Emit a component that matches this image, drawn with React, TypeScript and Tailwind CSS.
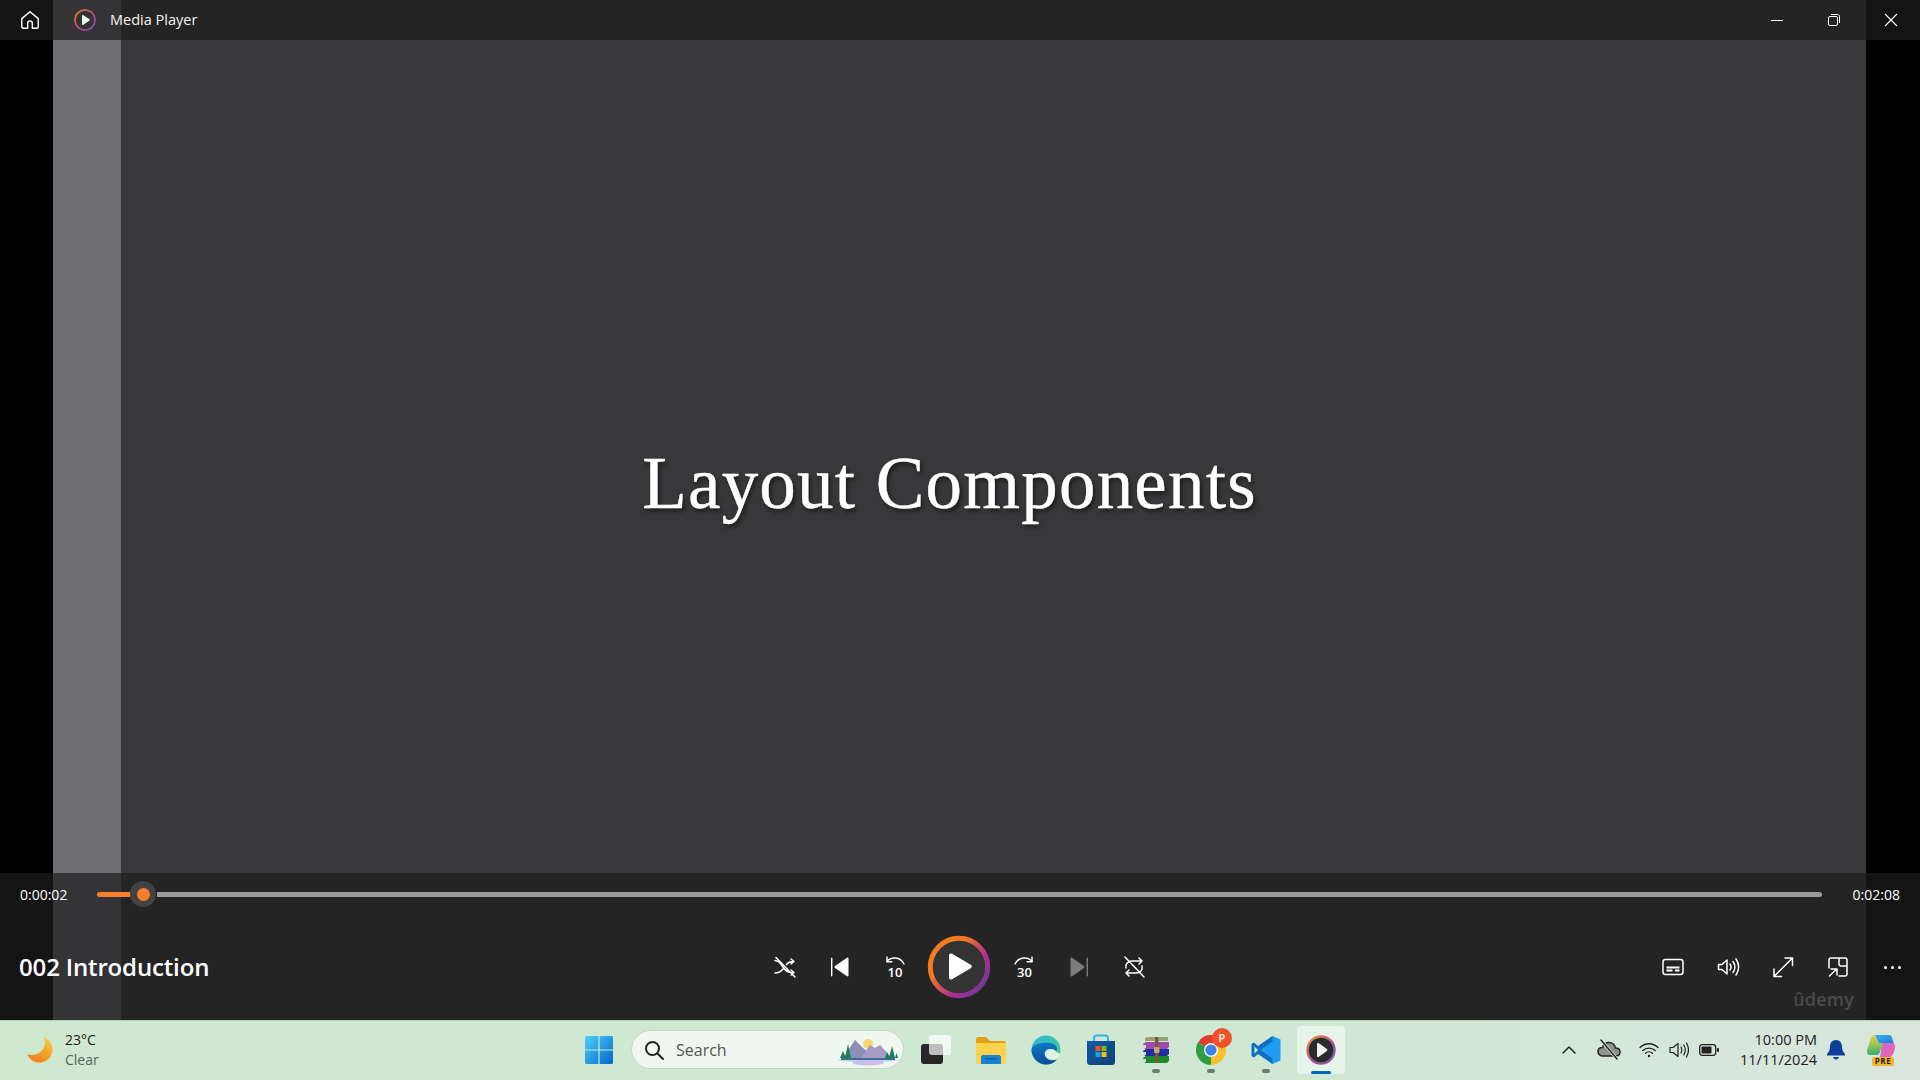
import { ReactNode } from 'react';

// shared svg wrapper for the white outline icons in the player
function Line({ size = 24, children, className = '' }: { size?: number; children: ReactNode; className?: string }) {
  return (
    <svg width={size} height={size} viewBox="0 0 24 24" fill="none" stroke="currentColor" strokeWidth={1.5} strokeLinecap="round" strokeLinejoin="round" className={className}>
      {children}
    </svg>
  );
}

function Ctl({ children, w = 'w-[55px]' }: { children: ReactNode; w?: string }) {
  return <div className={`flex h-[64px] items-center justify-center text-white ${w}`}>{children}</div>;
}

function PlayLogo() {
  return (
    <svg width="24" height="24" viewBox="0 0 24 24">
      <defs>
        <linearGradient id="logoRing" x1="0" y1="0" x2="1" y2="1">
          <stop offset="0" stopColor="#f5821f" />
          <stop offset="0.6" stopColor="#b5408f" />
          <stop offset="1" stopColor="#7c5bb5" />
        </linearGradient>
      </defs>
      <circle cx="12" cy="12" r="10" fill="#333" stroke="url(#logoRing)" strokeWidth="1.6" />
      <path d="M9 7.4c0-.5.5-.8 1-.5l6.6 4.4c.4.3.4.9 0 1.2L10 17c-.5.3-1 0-1-.5z" fill="#f0f0f0" />
    </svg>
  );
}

function BigPlay() {
  return (
    <svg width="64" height="64" viewBox="0 0 64 64">
      <defs>
        <linearGradient id="bigRing" x1="0.1" y1="0.1" x2="0.9" y2="0.8">
          <stop offset="0.3" stopColor="#f27a21" />
          <stop offset="0.72" stopColor="#b32d8e" />
          <stop offset="1" stopColor="#7a3a98" />
        </linearGradient>
      </defs>
      <circle cx="32" cy="32" r="28.7" fill="#333333" stroke="url(#bigRing)" strokeWidth="5" />
      <path d="M22 20.500c0-1.600 1.700-2.600 3.100-1.800l18.600 11c1.400.8 1.400 2.800 0 3.600l-18.600 11c-1.400.8-3.100-.2-3.100-1.800z" fill="#fff" />
    </svg>
  );
}

function SkipBack({ dim = false }: { dim?: boolean }) {
  return (
    <svg width="24" height="24" viewBox="0 0 24 24" className={dim ? 'opacity-40' : ''}>
      <rect x="3" y="2.500" width="1.400" height="19" rx="0.7" fill="#fff" />
      <path d="M20.500 3.500v17c0 .8-.8 1.200-1.500.8L7 13c-.7-.5-.7-1.500 0-2l12-8.300c.7-.5 1.500-.1 1.500.8z" fill="#fff" />
    </svg>
  );
}

function Seek({ label, flip = false }: { label: string; flip?: boolean }) {
  return (
    <svg width="26" height="26" viewBox="0 0 26 26" fill="none">
      <g stroke="#fff" strokeWidth="1.400" strokeLinecap="round" strokeLinejoin="round" transform={flip ? 'matrix(-1 0 0 1 26 0)' : undefined}>
        <path d="M5 7.500c4-5 13-5 17 2.500" />
        <path d="M5 3v4.800h4.800" />
      </g>
      <text x={flip ? 13.500 : 13} y="22.700" textAnchor="middle" fill="#fff" fontSize="13" fontWeight="600" fontFamily="Open Sans, sans-serif">{label}</text>
    </svg>
  );
}

function Moon() {
  return (
    <svg width="30" height="30" viewBox="0 0 30 30">
      <defs>
        <linearGradient id="moon" x1="0.8" y1="0" x2="0.3" y2="1">
          <stop offset="0" stopColor="#f8cf3a" />
          <stop offset="1" stopColor="#ee7d1c" />
        </linearGradient>
      </defs>
      <path d="M18 2c5.500 1.600 9.500 6.500 9.500 12.300 0 7.400-5.900 13.300-13.200 13.300C8.800 27.600 4.200 24 2.300 19.300c1.300.5 2.900.7 4.500.7 7.600 0 13.300-5.900 13.300-13.200 0-1.700-.8-3.300-2.100-4.800z" fill="url(#moon)" />
    </svg>
  );
}

function WinLogo() {
  return (
    <svg width="30" height="30" viewBox="0 0 30 30">
      <defs>
        <linearGradient id="win" x1="0" y1="0" x2="1" y2="1">
          <stop offset="0" stopColor="#4fd0fb" />
          <stop offset="1" stopColor="#0068c8" />
        </linearGradient>
      </defs>
      <path d="M1 2.500C1 1.700 1.700 1 2.500 1H14.400V14.400H1zM15.600 1h11.900c.8 0 1.500.7 1.500 1.500V14.400H15.600zM1 15.600H14.400V29H2.500C1.700 29 1 28.300 1 27.500zM15.600 15.600H29V27.500c0 .8-.7 1.500-1.500 1.500H15.600z" fill="url(#win)" />
    </svg>
  );
}

function Landscape() {
  return (
    <svg width="62" height="32" viewBox="0 0 62 32">
      <ellipse cx="31" cy="26" rx="30" ry="2" fill="#b9dcec" />
      <ellipse cx="31" cy="28.500" rx="16" ry="3" fill="#c9bdea" />
      <circle cx="31" cy="10" r="5" fill="#f5d76e" />
      <path d="M6 24 18 6l8 8 4 3 7 7z" fill="#8d8fb8" />
      <path d="M24 24 33 11l5 3 5-3 12 13z" fill="#a79cc4" />
      <path d="M4 24h54v2H4z" fill="#3c6f8e" />
      <path d="M8 24 11 10l3 14zM3 24l3-7 3 7zM52 24l3-12 3 12zM48 24l2-6 3 6zM58 24l1.500-5 1.500 5z" fill="#1f7d57" />
    </svg>
  );
}

function TaskView() {
  return (
    <div className="relative h-[30px] w-[30px]">
      <div className="absolute bottom-[1px] left-0 h-[20px] w-[22px] rounded-[3px] bg-[#272727]" />
      <div className="absolute right-0 top-0 h-[20px] w-[22px] rounded-[3px] bg-white/70" />
    </div>
  );
}

function Folder() {
  return (
    <svg width="32" height="28" viewBox="0 0 32 28">
      <path d="M1 3c0-1 .8-2 2-2h8l4 4h14c1 0 2 1 2 2v6H1z" fill="#e0a30f" />
      <path d="M1 7h30v19c0 1-1 2-2 2H3c-1 0-2-1-2-2z" fill="#fbd34f" />
      <path d="M6 21c0-1 .8-2 2-2h16c1 0 2 1 2 2v7H6z" fill="#1a82d0" />
      <rect x="10" y="22" width="12" height="1.500" fill="#0e5ea5" />
    </svg>
  );
}

function Edge() {
  return (
    <svg width="30" height="30" viewBox="0 0 30 30">
      <defs>
        <linearGradient id="edge1" x1="0" y1="0" x2="1" y2="1">
          <stop offset="0" stopColor="#2fb6e0" />
          <stop offset="1" stopColor="#45d07a" />
        </linearGradient>
        <linearGradient id="edge2" x1="0" y1="0" x2="0" y2="1">
          <stop offset="0" stopColor="#0f79c8" />
          <stop offset="1" stopColor="#0c4c97" />
        </linearGradient>
      </defs>
      <circle cx="15" cy="15" r="14.500" fill="url(#edge1)" />
      <path d="M.5 15C1 23 7 29.500 15 29.500c4.500 0 8.500-2 11-5-4 1.500-9 1-11-2-2-3-.5-7 3-8 2-.6 5-.3 7 2 3-4-1-8-6-8.500C10 7 1 9 .5 15z" fill="url(#edge2)" />
      <path d="M15 22c-2.500-3-1-7.500 3.500-8 3-.3 6 .5 7 3l4 2c-1 2-2 4-4 5.500-4 1.500-8.500 0-10.500-2.500z" fill="#e8f3e4" opacity="0.95" />
    </svg>
  );
}

function Store() {
  return (
    <svg width="30" height="32" viewBox="0 0 30 32">
      <defs>
        <linearGradient id="bag" x1="0" y1="0" x2="1" y2="1">
          <stop offset="0" stopColor="#0b5da8" />
          <stop offset="1" stopColor="#123f78" />
        </linearGradient>
      </defs>
      <path d="M8 7V4c0-1.500 1-2.500 2.500-2.500h9C21 1.500 22 2.500 22 4v3" fill="none" stroke="#33b5ea" strokeWidth="2" />
      <path d="M1 7h28v21c0 1.800-1.200 3-3 3H4c-1.800 0-3-1.200-3-3z" fill="url(#bag)" />
      <rect x="9.500" y="12" width="5" height="5" fill="#f25022" />
      <rect x="15.500" y="12" width="5" height="5" fill="#7fba00" />
      <rect x="9.500" y="18" width="5" height="5" fill="#00a4ef" />
      <rect x="15.500" y="18" width="5" height="5" fill="#ffb900" />
    </svg>
  );
}

function WinRar() {
  return (
    <svg width="28" height="28" viewBox="0 0 28 28">
      <path d="M1 22l3-2h23v5l-2 2H3z" fill="#1c8a2d" />
      <path d="M1 15l3-2h23v5l-2 2H3z" fill="#1f2f9e" />
      <path d="M1 8l3-2h23v5l-2 2H3z" fill="#a04ab0" />
      <path d="M3 2l3-1h20v4H3z" fill="#9aa07a" />
      <path d="M1 9h3v3H1zM1 16h3v3H1zM1 23h3v3H1z" fill="#d8d8d0" />
      <rect x="13" y="1" width="3.500" height="26" fill="#7a5a34" />
      <rect x="12" y="11" width="5.500" height="6" rx="1" fill="#c7a469" />
    </svg>
  );
}

function Chrome() {
  return (
    <div className="relative h-[30px] w-[30px]">
      <svg width="30" height="30" viewBox="0 0 30 30">
        <path d="M15 15 2 7.500A15 15 0 0 1 28 7.500z" fill="#e33b2e" />
        <path d="M15 15 2 7.500A15 15 0 0 0 15 30z" fill="#2e9e46" />
        <path d="M15 15 28 7.500A15 15 0 0 1 15 30z" fill="#fbc02d" />
        <circle cx="15" cy="15" r="7" fill="#fff" />
        <circle cx="15" cy="15" r="5.600" fill="#3f80ea" />
      </svg>
      <div className="absolute right-[-6px] top-[-7px] flex h-[20px] w-[20px] items-center justify-center rounded-full bg-[#f0522a] font-['Open_Sans'] text-[11px] font-semibold leading-none text-white">P</div>
    </div>
  );
}

function VSCode() {
  return (
    <svg width="30" height="30" viewBox="0 0 30 30">
      <path d="M21.500 1 29.500 4.500v21l-8 3.500L7 15.500z" fill="#1f9cf0" />
      <path d="M21.500 6.500 9.500 15l12 8.500v5.500L7 19 3 22.500.5 21V9l2.500-1.500L7 11l14.500-10z" fill="#0f6fc0" />
      <path d="M3.500 11.500v7L7 15z" fill="#d3e8d4" />
    </svg>
  );
}

function PlayerTile() {
  return (
    <svg width="30" height="30" viewBox="0 0 30 30">
      <defs>
        <linearGradient id="tile" x1="0.1" y1="0" x2="0.9" y2="1">
          <stop offset="0" stopColor="#ef8a3c" />
          <stop offset="0.6" stopColor="#a8509a" />
          <stop offset="1" stopColor="#7c5fb0" />
        </linearGradient>
      </defs>
      <circle cx="15" cy="15" r="13.500" fill="#2a2a2a" stroke="url(#tile)" strokeWidth="2.400" />
      <path d="M11 9c0-.9.900-1.300 1.600-.9l8.300 5.900c.6.500.6 1.400 0 1.900l-8.300 6c-.7.500-1.600 0-1.600-.9z" fill="#f2f2f2" />
    </svg>
  );
}

function Copilot() {
  return (
    <div className="relative h-[32px] w-[30px]">
      <svg width="30" height="26" viewBox="0 0 30 26">
        <defs>
          <linearGradient id="cpA" x1="0" y1="0" x2="1" y2="1">
            <stop offset="0" stopColor="#2fb7ee" />
            <stop offset="1" stopColor="#2c6fe0" />
          </linearGradient>
          <linearGradient id="cpB" x1="0" y1="0" x2="1" y2="1">
            <stop offset="0" stopColor="#c86ae0" />
            <stop offset="1" stopColor="#f3619a" />
          </linearGradient>
          <linearGradient id="cpC" x1="0" y1="0" x2="0" y2="1">
            <stop offset="0" stopColor="#f2d13c" />
            <stop offset="1" stopColor="#35b36f" />
          </linearGradient>
        </defs>
        <path d="M9 1h14c2 0 2.500 1.500 3 3l2 6H13z" fill="url(#cpA)" />
        <path d="M16 9h10c2 0 3 1.500 3 3 0 5-3 12-7 12H14z" fill="url(#cpB)" />
        <path d="M9 1C6 1 5 3 4 7 3 11 1 15 1 18c0 2 1 3 3 3h6c3 0 4-2 4.500-5L17 9H12z" fill="url(#cpC)" />
      </svg>
      <div className="absolute bottom-0 left-[6px] flex h-[9px] w-[22px] items-center justify-center rounded-[2px] bg-[#f7b32b] font-['Open_Sans'] text-[8px] font-bold leading-none tracking-[0.5px] text-[#222]">PRE</div>
    </div>
  );
}

function Pin({ children, running, active }: { children: ReactNode; running?: boolean; active?: boolean }) {
  return (
    <div className={`relative flex h-[48px] w-[48px] items-center justify-center rounded-[4px] ${active ? 'bg-white/50' : ''}`}>
      {children}
      {running && <div className="absolute bottom-[1px] h-[4px] w-[8px] rounded-full bg-[#6d7a70]" />}
      {active && <div className="absolute bottom-0 h-[3px] w-[20px] rounded-full bg-[#0067c0]" />}
    </div>
  );
}

export default function App() {
  return (
    <div className="flex h-screen w-full flex-col overflow-hidden bg-black font-['Open_Sans',sans-serif]">
      <div className="relative h-[1020px]">
        {/* the video frame: black bars, pale strip, slide */}
        <div className="absolute inset-0 flex">
          <div className="w-[53px] bg-black" />
          <div className="w-[68px] bg-[#6e6d72]" />
          <div className="flex w-[1745px] items-center justify-center bg-[#38383a] pb-[54px] pr-[88px]">
            <div className="font-['Liberation_Serif',serif] text-[73px] leading-none tracking-[1.2px] text-white [-webkit-text-stroke:0.4px_white] [text-shadow:2px_3px_4px_rgba(0,0,0,0.55)]">Layout Components</div>
          </div>
          <div className="flex-1 bg-black" />
        </div>

        <div className="relative flex h-full flex-col">
          <header className="flex h-[40px] items-center bg-[#1c1c1c]/[0.71] text-white">
            <div className="flex w-[60px] justify-center">
              <Line size={22}>
                <path d="M3 10.500 12 3l9 7.500V19c0 1.200-.8 2-2 2h-4.500v-5.500c0-1.400-1-2.500-2.500-2.500s-2.500 1.100-2.500 2.500V21H5c-1.200 0-2-.8-2-2z" />
              </Line>
            </div>
            <div className="ml-[13px] mr-[13px]"><PlayLogo /></div>
            <span className="text-[14.500px] text-[#f2f2f2]">Media Player</span>
            <div className="ml-auto flex h-full items-center">
              <div className="flex w-[54px] justify-center">
                <div className="h-[1px] w-[12px] bg-white" />
              </div>
              <div className="flex w-[60px] justify-center">
                <svg width="14" height="14" viewBox="0 0 14 14" fill="none" stroke="#fff" strokeWidth="1">
                  <rect x="1.500" y="3.500" width="9" height="9" rx="1.500" />
                  <path d="M4 1.500h6.500c1.200 0 2 .8 2 2V10" />
                </svg>
              </div>
              <div className="flex w-[56px] justify-center pr-[2px]">
                <svg width="14" height="14" viewBox="0 0 14 14" stroke="#fff" strokeWidth="1.100">
                  <path d="M1 1l12 12M13 1 1 13" />
                </svg>
              </div>
            </div>
          </header>

          <div className="flex-1" />

          <section className="relative h-[147px] bg-[#1c1c1c]/[0.71]">
            <div className="flex h-[42px] items-center pl-[20px] pr-[20px] text-[14px] text-white">
              <span className="w-[77px]">0:00:02</span>
              <div className="relative flex h-[5px] flex-1 items-center">
                <div className="h-[5px] w-[35px] rounded-l-full bg-[#f77f2c]" />
                <div className="ml-[25px] h-[5px] flex-1 rounded-r-full bg-[#9b9b9b]" />
                <div className="absolute left-[33px] flex h-[26px] w-[26px] items-center justify-center rounded-full bg-[#424242]">
                  <div className="h-[13px] w-[13px] rounded-full bg-[#f77f2c]" />
                </div>
              </div>
              <span className="w-[78px] text-right">0:02:08</span>
            </div>

            <div className="mt-[20px] flex h-[64px] items-center">
              <div className="w-[757px] pl-[19px] text-[24px] font-semibold leading-none tracking-[-0.15px] text-white">002 Introduction</div>
              <div className="flex items-center">
                <Ctl>
                  <Line size={24}>
                    <path d="M2 5.500c3 0 5.500 2.500 8 6.500 2.200 3.500 4.500 5.500 9 5.500M2 18c3.500 0 6-1.500 8-4M13.500 9.500c1.500-2 3.500-3 6.500-3M18 4l3 2.500L18 9M18 15l3 2.500L18 20M3 2.500 22 22" />
                  </Line>
                </Ctl>
                <Ctl><SkipBack /></Ctl>
                <Ctl><Seek label="10" /></Ctl>
                <Ctl w="w-[74px]"><BigPlay /></Ctl>
                <Ctl><Seek label="30" flip /></Ctl>
                <Ctl><div className="-scale-x-100"><SkipBack dim /></div></Ctl>
                <Ctl>
                  <Line size={24}>
                    <path d="M4 13c-1-4 2-7 6-7h10M17 3l3 3-3 3M20 11c1 4-2 7-6 7H4M7 21l-3-3 3-3M3 2l19 20" />
                  </Line>
                </Ctl>
              </div>
              <div className="flex flex-1 items-center justify-end">
                <Ctl>
                  <Line size={24}>
                    <rect x="2" y="4.500" width="20" height="15" rx="2.500" />
                    <path d="M5.500 12.500h13M5.500 15.500h6M14 15.500h4.500" strokeWidth="1.800" strokeLinecap="butt" />
                  </Line>
                </Ctl>
                <Ctl>
                  <Line size={24}>
                    <path d="M2.500 9.500h3.500L11 5v14l-5-4.500H2.500z" />
                    <path d="M14 9c1.300 1.800 1.300 4.200 0 6M17 6.500c2.300 3.300 2.300 7.700 0 11M20 4c3.300 5 3.300 11 0 16" />
                  </Line>
                </Ctl>
                <Ctl>
                  <Line size={24}>
                    <path d="M14 3h7.500v7.500M21.500 3 3 21.500M3 14v7.500h7.500" />
                  </Line>
                </Ctl>
                <Ctl>
                  <Line size={24}>
                    <path d="M3 13V5c0-1.200.8-2 2-2h14c1.200 0 2 .8 2 2v14c0 1.200-.8 2-2 2h-6M13 3v6c0 1.200.8 2 2 2h6M3.500 21l7-7M5 14h6v6" />
                  </Line>
                </Ctl>
                <Ctl>
                  <div className="flex gap-[4px]">
                    <div className="h-[3px] w-[3px] rounded-full bg-white" />
                    <div className="h-[3px] w-[3px] rounded-full bg-white" />
                    <div className="h-[3px] w-[3px] rounded-full bg-white" />
                  </div>
                </Ctl>
              </div>
            </div>
            <div className="absolute right-[66px] top-[117px] text-[18px] font-semibold leading-none tracking-[0.2px] text-[#4a4a4a]">ûdemy</div>
          </section>
        </div>
      </div>

      {/* windows taskbar */}
      <footer className="flex h-[60px] items-center border-t border-[#bccabc] bg-[linear-gradient(90deg,#cfe8d0,#cfe8d3_70%,#d9e6dc)] pb-[2px] text-[#1c1c1c]">
        <div className="flex w-[584px] items-center pl-[25px]">
          <Moon />
          <div className="ml-[10px] text-[14px] leading-[20px]">
            <div>23°C</div>
            <div className="text-[#5a635b]">Clear</div>
          </div>
        </div>
        <WinLogo />
        <div className="ml-[17px] flex h-[39px] w-[273px] items-center rounded-full border border-[#c5d5c5] bg-[#eef8ef] pl-[11px] pr-[4px]">
          <svg width="22" height="22" viewBox="0 0 22 22" fill="none" stroke="#222" strokeWidth="2" strokeLinecap="round">
            <circle cx="9.500" cy="9.500" r="6.500" />
            <path d="M14.500 14.500 20 20" />
          </svg>
          <span className="ml-[11px] text-[16px] text-[#555]">Search</span>
          <div className="ml-auto"><Landscape /></div>
        </div>
        <div className="ml-[17px]"><TaskView /></div>
        <div className="ml-[16px] flex items-center gap-[7px]">
          <Pin><Folder /></Pin>
          <Pin><Edge /></Pin>
          <Pin><Store /></Pin>
          <Pin running><WinRar /></Pin>
          <Pin running><Chrome /></Pin>
          <Pin running><VSCode /></Pin>
          <Pin active><PlayerTile /></Pin>
        </div>
        <div className="ml-auto flex items-center pr-[24px]">
          <svg width="16" height="10" viewBox="0 0 16 10" fill="none" stroke="#222" strokeWidth="1.500" strokeLinecap="round" strokeLinejoin="round">
            <path d="M2 8l6-6 6 6" />
          </svg>
          <svg className="ml-[20px]" width="24" height="22" viewBox="0 0 24 22" fill="none" stroke="#222" strokeWidth="1.500" strokeLinecap="round">
            <path d="M7 17H6c-3 0-5-2-5-4.500S3 8.500 5.500 8.500C6.500 5.500 9 3.500 12 3.500c3.500 0 6 2.500 6.500 5.500 2.500 0 4.500 1.500 4.500 4s-2 4-4.500 4H7z" fill="#8a948a" />
            <path d="M4 1l16 19" stroke="#d8e8d8" strokeWidth="3" />
            <path d="M4 1l16 19" />
          </svg>
          <svg className="ml-[18px]" width="20" height="16" viewBox="0 0 20 16" fill="none" stroke="#222" strokeWidth="1.300" strokeLinecap="round">
            <path d="M1 5.500c5-5 13-5 18 0M3.800 8.500c3.500-3.300 9-3.300 12.400 0M6.500 11.200c2-1.800 5-1.800 7 0" />
            <circle cx="10" cy="14" r="1.200" fill="#222" stroke="none" />
          </svg>
          <svg className="ml-[10px]" width="20" height="18" viewBox="0 0 20 18" fill="none" stroke="#222" strokeWidth="1.200" strokeLinecap="round" strokeLinejoin="round">
            <path d="M1 6.500h3L9 2.500v13l-5-4H1z" />
            <path d="M12 6c1 2 1 4 0 6M14.800 4c1.800 3 1.800 7 0 10M17.500 2c2.500 4.500 2.500 9.500 0 14" />
          </svg>
          <svg className="ml-[10px]" width="20" height="12" viewBox="0 0 20 12">
            <rect x="0.700" y="0.700" width="16" height="10.600" rx="2.500" fill="none" stroke="#222" strokeWidth="1.300" />
            <rect x="2.500" y="2.500" width="10" height="7" rx="1" fill="#222" />
            <rect x="18" y="4" width="2" height="4" rx="1" fill="#222" />
          </svg>
          <div className="ml-[14px] w-[84px] text-right text-[14.500px] leading-[20px] text-[#222]">
            <div>10:00 PM</div>
            <div>11/11/2024</div>
          </div>
          <svg className="ml-[10px]" width="18" height="20" viewBox="0 0 18 20">
            <path d="M9 0c3.500 0 6 2.800 6 6.500 0 3 1 5.500 3 7.500v1.500H0V14c2-2 3-4.500 3-7.500C3 2.800 5.500 0 9 0z" fill="#0c3f9b" />
            <path d="M6 17h6c-.4 1.500-1.500 2.500-3 2.500S6.400 18.500 6 17z" fill="#0c3f9b" />
          </svg>
          <div className="ml-[21px]"><Copilot /></div>
        </div>
      </footer>
    </div>
  );
}
